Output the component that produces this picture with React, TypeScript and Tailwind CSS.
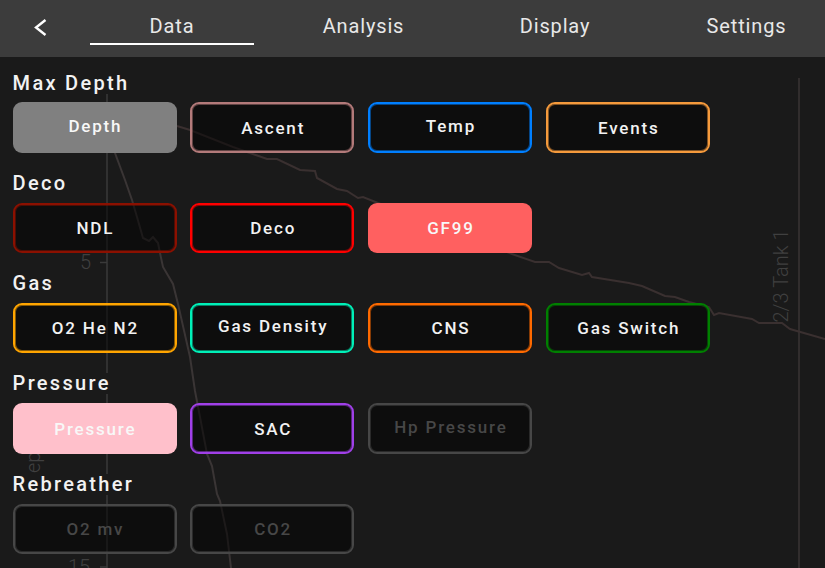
const ROBOTO = "font-['Roboto',sans-serif]";

type Btn = {
  label: string;
  kind: "outline" | "filled" | "muted";
  border?: string;
  fill?: string;
  up?: boolean;
};

const groups: { title: string; items: Btn[] }[] = [
  {
    title: "Max Depth",
    items: [
      { label: "Depth", kind: "filled", fill: "bg-[#808080]", up: true },
      { label: "Ascent", kind: "outline", border: "border-[#b37a7a] shadow-[inset_0_0_0_1px_#b37a7a80]" },
      { label: "Temp", kind: "outline", border: "border-[#007fff] shadow-[inset_0_0_0_1px_#007fff80]", up: true },
      { label: "Events", kind: "outline", border: "border-[#f59a3c] shadow-[inset_0_0_0_1px_#f59a3c80]" },
    ],
  },
  {
    title: "Deco",
    items: [
      { label: "NDL", kind: "outline", border: "border-[#8b1000] shadow-[inset_0_0_0_1px_#8b100080]" },
      { label: "Deco", kind: "outline", border: "border-[#ff0000] shadow-[inset_0_0_0_1px_#ff000080]" },
      { label: "GF99", kind: "filled", fill: "bg-[#ff6060]" },
    ],
  },
  {
    title: "Gas",
    items: [
      { label: "O2 He N2", kind: "outline", border: "border-[#ffa500] shadow-[inset_0_0_0_1px_#ffa50080]" },
      { label: "Gas Density", kind: "outline", border: "border-[#00f0b8] shadow-[inset_0_0_0_1px_#00f0b880]", up: true },
      { label: "CNS", kind: "outline", border: "border-[#ff6a00] shadow-[inset_0_0_0_1px_#ff6a0080]" },
      { label: "Gas Switch", kind: "outline", border: "border-[#008000] shadow-[inset_0_0_0_1px_#00800080]" },
    ],
  },
  {
    title: "Pressure",
    items: [
      { label: "Pressure", kind: "filled", fill: "bg-[#ffc0cb]" },
      { label: "SAC", kind: "outline", border: "border-[#a040e8] shadow-[inset_0_0_0_1px_#a040e880]" },
      { label: "Hp Pressure", kind: "muted", up: true },
    ],
  },
  {
    title: "Rebreather",
    items: [
      { label: "O2 mv", kind: "muted" },
      { label: "CO2", kind: "muted" },
    ],
  },
];

const depthLine =
  "M113,146 L115,153 L125,180 L132,200 L137,217 L143,238 L149,241 L153,237 L158,243 L160,253 L163,267 L173,284 L178,304 L190,357 L195,391 L200,417 L207,454 L212,466 L217,494 L220,501 L227,534 L231,568";
const tankLine =
  "M177,126 L190,130 L233,147 L267,159 L277,159 L300,170 L315,171 L317,178 L337,189 L347,191 L358,198 L363,197 L378,203 L512,254 L535,262 L549,262 L559,268 L582,275 L589,273 L592,277 L629,283 L642,286 L665,296 L675,297 L689,302 L709,307 L714,315 L719,313 L752,319 L759,323 L782,323 L790,329 L825,339";

function Chart() {
  return (
    <div className="absolute inset-0 overflow-hidden">
      <svg className="absolute inset-0" width="825" height="568" viewBox="0 0 825 568" fill="none">
        <path d="M107 78V568" stroke="#3a3a3a" strokeWidth="1.500" />
        <path d="M799 78V568" stroke="#3a3535" strokeWidth="1.500" />
        <path d="M100 262.500H107" stroke="#3a3a3a" strokeWidth="1.500" />
        <path d="M100 567H107" stroke="#3a3a3a" strokeWidth="1.500" />
        <path d={depthLine} stroke="#3a3535" strokeWidth="2" />
        <path d={tankLine} stroke="#3a3030" strokeWidth="2" />
      </svg>
      <span className="absolute left-[80px] top-[250px] text-[20px] font-light leading-[24px] text-[#404040]">5</span>
      <span className="absolute left-[68px] top-[555px] text-[20px] font-light leading-[24px] text-[#404040]">15</span>
      <span className="absolute left-[32.500px] top-[443.500px] origin-center -translate-x-1/2 -translate-y-1/2 -rotate-90 whitespace-nowrap text-[20px] font-light leading-[24px] text-[#404040]">
        Depth [m]
      </span>
      <span className="absolute left-[781px] top-[275.500px] origin-center -translate-x-1/2 -translate-y-1/2 -rotate-90 whitespace-nowrap text-[20px] font-light leading-[24px] text-[#404040]">
        2/3 Tank 1
      </span>
    </div>
  );
}

function Tab({ label, active }: { label: string; active?: boolean }) {
  return (
    <div className="relative flex h-full w-[164px] items-center justify-center pb-[6px] text-[20px] tracking-[0.85px] text-[#e8e8e8]">
      {label}
      {active && <div className="absolute bottom-[12px] left-0 right-0 h-[2px] bg-white" />}
    </div>
  );
}

function ToggleButton({ b }: { b: Btn }) {
  const shell =
    b.kind === "filled"
      ? `${b.fill} border-transparent`
      : b.kind === "muted"
        ? "border-[#474747] bg-black/50 shadow-[inset_0_0_0_1px_#47474780]"
        : `${b.border} bg-black/50`;
  const text =
    b.kind === "muted" ? "text-[#474747]" : b.kind === "filled" ? "text-[#f8f8f8]" : "text-[#f2f2f2]";
  return (
    <button
      className={`flex h-[50.400px] w-[164px] items-center justify-center rounded-[9px] border-2 text-[17px] font-medium tracking-[1.8px] ${shell} ${text}`}
    >
      <span className={`pl-[1.500px] ${b.up ? "-translate-y-px" : "translate-y-px"}`}>{b.label}</span>
    </button>
  );
}

export default function App() {
  return (
    <div className={`relative h-[568px] w-[825px] overflow-hidden bg-[#1a1a1a] ${ROBOTO}`}>
      <Chart />
      <div className="relative flex h-[57px] items-center bg-[#3c3c3c] pl-[90px]">
        <svg className="absolute left-[33px] top-[18px]" width="15" height="19" viewBox="0 0 15 19" fill="none">
          <path d="M12.500 2L3 9.500L12.500 17" stroke="#ffffff" strokeWidth="2.400" />
        </svg>
        <div className="flex h-full gap-[27.500px]">
          <Tab label="Data" active />
          <Tab label="Analysis" />
          <Tab label="Display" />
          <Tab label="Settings" />
        </div>
      </div>
      <div className="relative flex flex-col pl-[12.600px] pt-[12.800px]">
        {groups.map((g, i) => (
          <div key={g.title} className="mb-[17.600px] flex flex-col items-start">
            <div
              className={`h-[21px] bg-[#1a1a1a] text-[20px] font-medium leading-[21px] tracking-[2.300px] text-[#f2f2f2] ${
                i === 0 ? "mb-[7.900px] mt-[3.500px]" : "mb-[8.900px] mt-[2.500px]"
              }`}
            >
              {g.title}
            </div>
            <div className="flex gap-[13.800px]">
              {g.items.map((b) => (
                <ToggleButton key={b.label} b={b} />
              ))}
            </div>
          </div>
        ))}
      </div>
    </div>
  );
}
